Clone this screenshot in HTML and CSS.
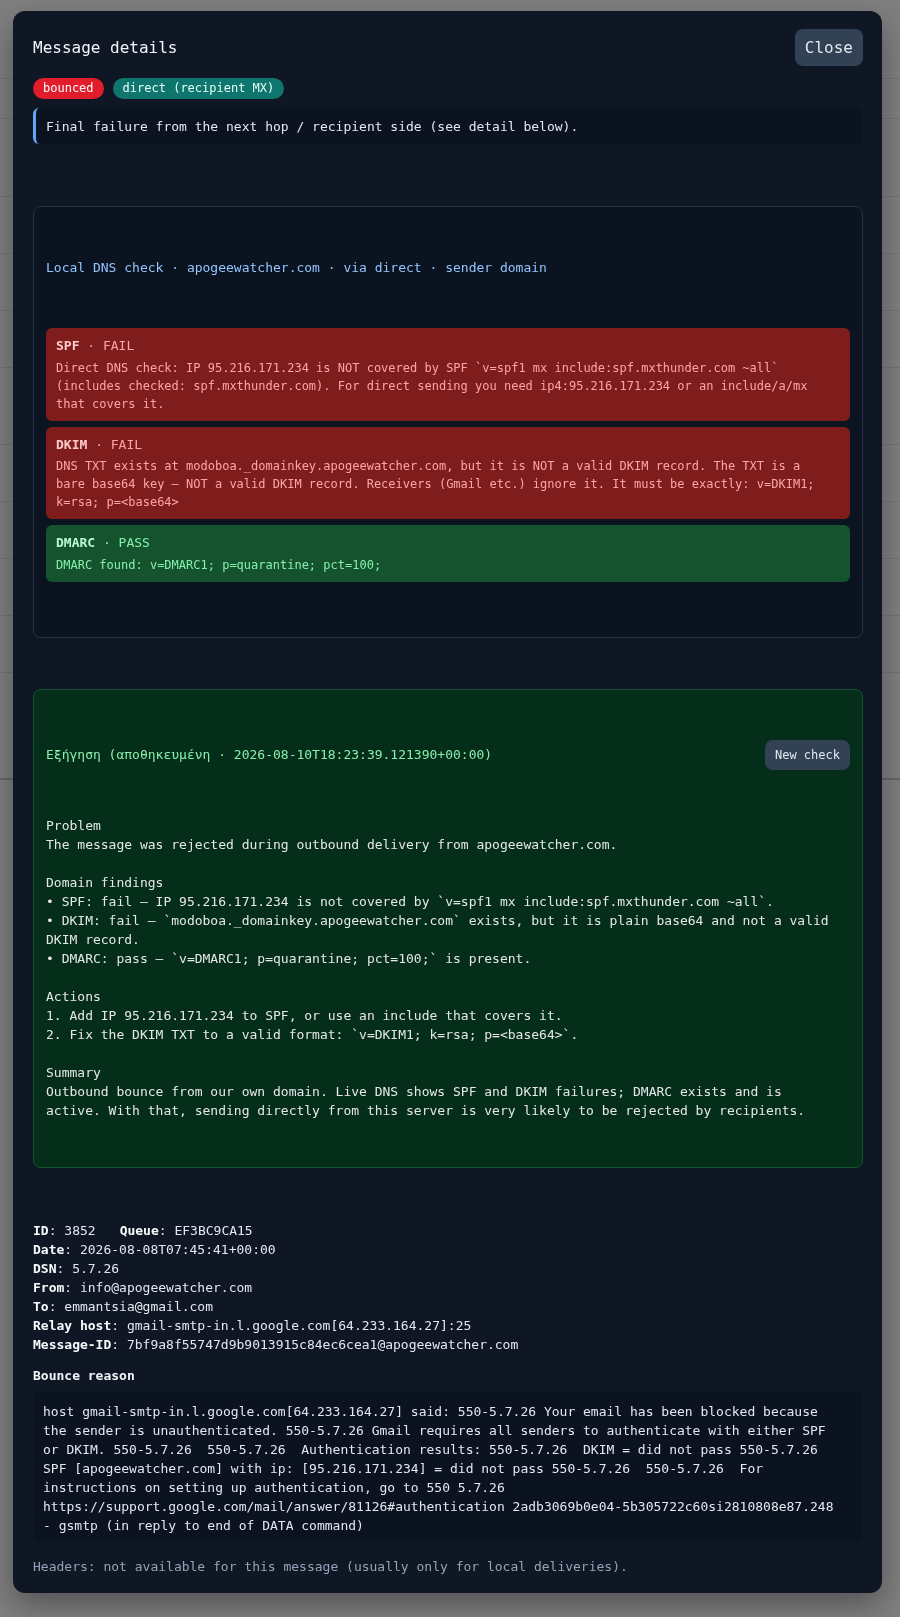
FILE: index.html
```html
<!DOCTYPE html>
<html lang="en">
<head>
<meta charset="utf-8">
<title>Message details</title>
<link rel="stylesheet" href="styles.css">
</head>
<body>
<div class="page">
  <div class="page-row r1"></div>
  <div class="page-row r2"></div>
  <div class="page-row r3"></div>
  <div class="page-row r3"></div>
  <div class="page-row r3"></div>
  <div class="page-row r4"></div>
  <div class="page-row r3"></div>
  <div class="page-row r3"></div>
  <div class="page-row r3"></div>
  <div class="page-row r3"></div>
  <div class="page-row r5"></div>
</div>
<div class="overlay">
  <div class="modal">
    <div class="modal-head">
      <h2 class="modal-title">Message details</h2>
      <button class="btn btn-close">Close</button>
    </div>
    <div class="badges">
      <span class="badge badge-red">bounced</span>
      <span class="badge badge-teal">direct (recipient MX)</span>
    </div>
    <div class="note">Final failure from the next hop / recipient side (see detail below).</div>

    <section class="dns-card">
      <div class="dns-title">Local DNS check · apogeewatcher.com · via direct · sender domain</div>
      <div class="checks">
        <div class="check check-fail">
          <div class="check-head"><strong>SPF</strong> · FAIL</div>
          <div class="check-body">Direct DNS check: IP 95.216.171.234 is NOT covered by SPF `v=spf1 mx include:spf.mxthunder.com ~all` (includes checked: spf.mxthunder.com). For direct sending you need ip4:95.216.171.234 or an include/a/mx that covers it.</div>
        </div>
        <div class="check check-fail">
          <div class="check-head"><strong>DKIM</strong> · FAIL</div>
          <div class="check-body">DNS TXT exists at modoboa._domainkey.apogeewatcher.com, but it is NOT a valid DKIM record. The TXT is a bare base64 key — NOT a valid DKIM record. Receivers (Gmail etc.) ignore it. It must be exactly: v=DKIM1; k=rsa; p=&lt;base64&gt;</div>
        </div>
        <div class="check check-pass">
          <div class="check-head"><strong>DMARC</strong> · PASS</div>
          <div class="check-body">DMARC found: v=DMARC1; p=quarantine; pct=100;</div>
        </div>
      </div>
    </section>

    <section class="explain">
      <div class="explain-head">
        <span class="explain-title">Εξήγηση (αποθηκευμένη · 2026-08-10T18:23:39.121390+00:00)</span>
        <button class="btn btn-small">New check</button>
      </div>
      <div class="explain-text">Problem
The message was rejected during outbound delivery from apogeewatcher.com.

Domain findings
• SPF: fail — IP 95.216.171.234 is not covered by `v=spf1 mx include:spf.mxthunder.com ~all`.
• DKIM: fail — `modoboa._domainkey.apogeewatcher.com` exists, but it is plain base64 and not a valid DKIM record.
• DMARC: pass — `v=DMARC1; p=quarantine; pct=100;` is present.

Actions
1. Add IP 95.216.171.234 to SPF, or use an include that covers it.
2. Fix the DKIM TXT to a valid format: `v=DKIM1; k=rsa; p=&lt;base64&gt;`.

Summary
Outbound bounce from our own domain. Live DNS shows SPF and DKIM failures; DMARC exists and is active. With that, sending directly from this server is very likely to be rejected by recipients.</div>
    </section>

    <div class="meta">
      <div><b>ID</b>: 3852<span class="meta-queue"><b>Queue</b>: EF3BC9CA15</span></div>
      <div><b>Date</b>: 2026-08-08T07:45:41+00:00</div>
      <div><b>DSN</b>: 5.7.26</div>
      <div><b>From</b>: info@apogeewatcher.com</div>
      <div><b>To</b>: emmantsia@gmail.com</div>
      <div><b>Relay host</b>: gmail-smtp-in.l.google.com[64.233.164.27]:25</div>
      <div><b>Message-ID</b>: 7bf9a8f55747d9b9013915c84ec6cea1@apogeewatcher.com</div>
    </div>

    <div class="section-label">Bounce reason</div>
    <div class="bounce">host gmail-smtp-in.l.google.com[64.233.164.27] said: 550-5.7.26 Your email has been blocked because the sender is unauthenticated. 550-5.7.26 Gmail requires all senders to authenticate with either SPF or DKIM. 550-5.7.26  550-5.7.26  Authentication results: 550-5.7.26  DKIM = did not pass 550-5.7.26 SPF [apogeewatcher.com] with ip: [95.216.171.234] = did not pass 550-5.7.26  550-5.7.26  For instructions on setting up authentication, go to 550 5.7.26 https://support.google.com/mail/answer/81126#authentication 2adb3069b0e04-5b305722c60si2810808e87.248 - gsmtp (in reply to end of DATA command)</div>

    <div class="headers-note">Headers: not available for this message (usually only for local deliveries).</div>
  </div>
</div>
</body>
</html>
```

FILE: styles.css
```css
* { box-sizing: border-box; }

html, body {
  margin: 0;
  padding: 0;
}

body {
  background: #ffffff;
  font-family: "DejaVu Sans Mono", monospace;
  font-size: 13px;
  color: #e2e8f0;
  width: 900px;
  height: 1617px;
  overflow: hidden;
}

/* underlying page (seen through the backdrop) */
.page {
  padding-top: 78px;
}
.page-row {
  border-top: 1px solid #e2e5ea;
}
.r1 { height: 40px; }
.r2 { height: 78px; }
.r3 { height: 57px; }
.r4 { height: 77px; }
.r5 { height: 108px; border-bottom: 2px solid #c9ccd2; }

/* backdrop */
.overlay {
  position: fixed;
  inset: 0;
  background: rgba(0, 0, 0, 0.5);
  padding: 11px 18px 0 13px;
}

.modal {
  width: 869px;
  background: #0f1725;
  border-radius: 12px;
  padding: 18px 19px 17px 20px;
  box-shadow: 0 12px 32px rgba(0, 0, 0, 0.35);
}

.modal-head {
  display: flex;
  justify-content: space-between;
  align-items: center;
}

.modal-title {
  margin: 0;
  font-size: 16px;
  font-weight: 400;
  line-height: 21px;
  color: #f1f5f9;
}

.btn {
  font-family: "DejaVu Sans Mono", monospace;
  border: 0;
  background: #334155;
  color: #e2e8f0;
  border-radius: 8px;
  cursor: pointer;
}

.btn-close {
  font-size: 16px;
  line-height: 21px;
  padding: 8px 10px;
}

.btn-small {
  font-size: 12px;
  line-height: 16px;
  padding: 7px 10px;
}

.badges {
  display: flex;
  gap: 9px;
  margin-top: 12px;
}

.badge {
  font-size: 12px;
  line-height: 21px;
  padding: 0 10px;
  border-radius: 999px;
  color: #ffffff;
}
.badge-red { background: #e11d2b; }
.badge-teal { background: #0f766e; color: #e6fffa; }

.note {
  margin-top: 9px;
  background: #0b1220;
  border-left: 3px solid #60a5fa;
  border-radius: 6px;
  padding: 9px 10px 8px 10px;
  line-height: 19px;
  color: #e2e8f0;
}

/* DNS card */
.dns-card {
  margin-top: 62px;
  background: #0b1220;
  border: 1px solid #243145;
  border-radius: 8px;
  padding: 12px;
}

.dns-title {
  color: #93c5fd;
  line-height: 19px;
  margin: 39px 0 51px;
}

.checks {
  display: flex;
  flex-direction: column;
  gap: 6px;
  margin-bottom: 43px;
}

.check {
  border-radius: 6px;
  padding: 8px 16px 8px 10px;
}

.check-head {
  font-size: 13px;
  line-height: 19.5px;
  margin-bottom: 3px;
}
.check-head strong { font-weight: 700; }

.check-body {
  font-size: 12px;
  line-height: 18px;
}

.check-fail {
  background: #7f1d1d;
  color: #fca5a5;
}
.check-fail strong { color: #fecaca; }

.check-pass {
  background: #14532d;
  color: #86efac;
}
.check-pass strong { color: #bbf7d0; }

/* Explanation card */
.explain {
  margin-top: 51px;
  background: #052e1a;
  border: 1px solid #14532d;
  border-radius: 8px;
  padding: 12px;
}

.explain-head {
  display: flex;
  justify-content: space-between;
  align-items: center;
  margin-top: 38px;
}

.explain-title {
  color: #86efac;
  line-height: 19px;
}

.explain-text {
  white-space: pre-wrap;
  line-height: 19px;
  color: #e5e7eb;
  margin: 46px 0 35px;
  padding-right: 14px;
}

/* Meta */
.meta {
  margin-top: 53px;
  line-height: 19px;
  color: #e2e8f0;
}
.meta b {
  font-weight: 700;
  color: #f8fafc;
}
.meta-queue {
  margin-left: 24px;
}

.section-label {
  margin-top: 12px;
  font-weight: 700;
  line-height: 19px;
  color: #f1f5f9;
}

.bounce {
  margin-top: 7px;
  background: #0b1220;
  border-radius: 6px;
  padding: 10px 18px 8px 10px;
  white-space: pre-wrap;
  line-height: 19px;
  color: #e2e8f0;
}

.headers-note {
  margin-top: 14px;
  line-height: 19px;
  color: #94a3b8;
}
```
